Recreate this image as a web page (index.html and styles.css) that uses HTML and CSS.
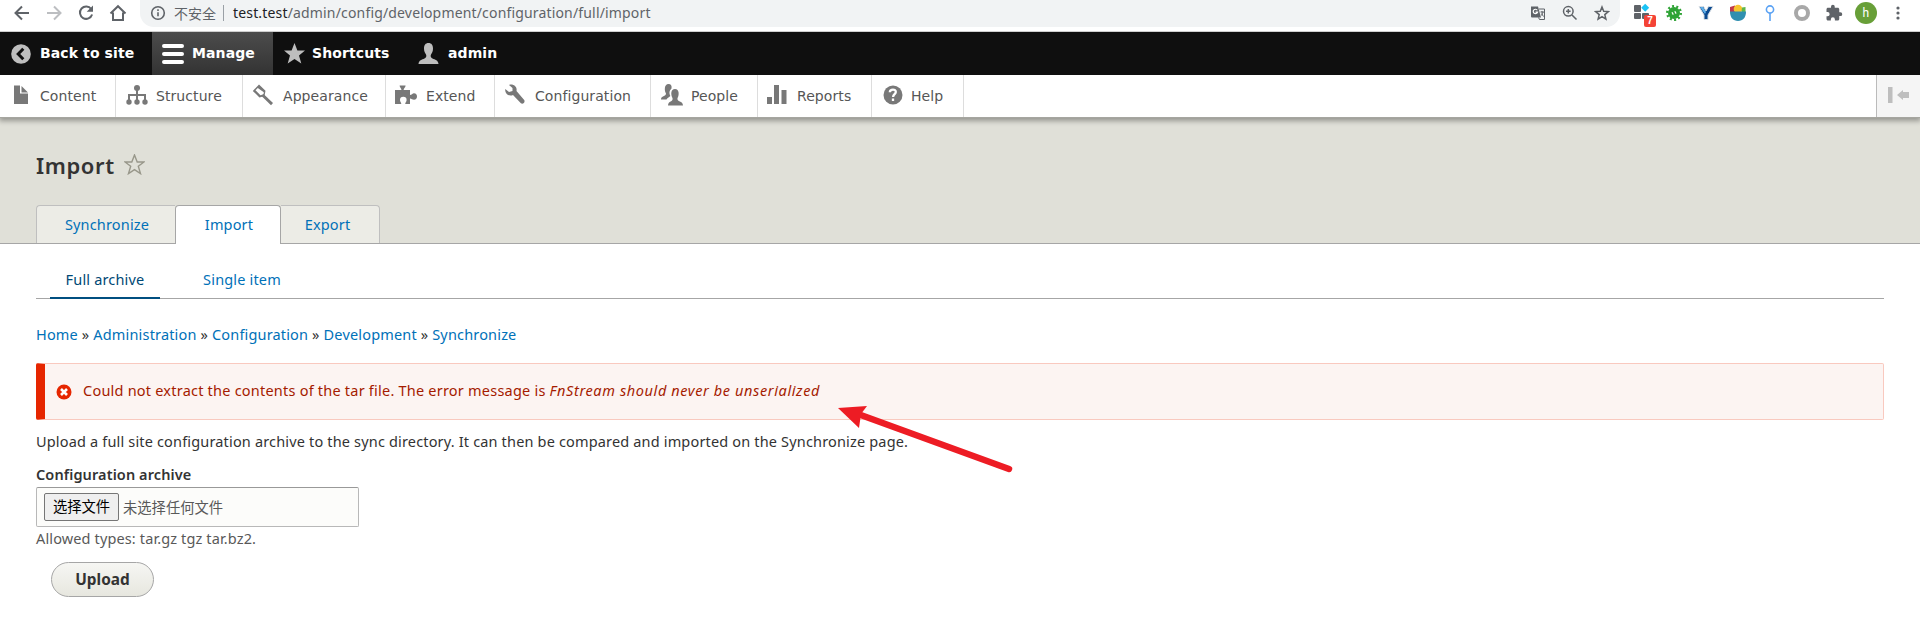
FILE: index.html
```html
<!DOCTYPE html>
<html lang="en">
<head>
<meta charset="utf-8">
<title>Import</title>
<link rel="stylesheet" href="styles.css">
</head>
<body>
<svg class="defs" width="0" height="0">
  <symbol id="puzzle" viewBox="0 0 24 24"><path d="M20.500 11H19V7c0-1.100-.9-2-2-2h-4V3.500a2.500 2.500 0 0 0-5 0V5H4c-1.100 0-2 .9-2 2v3.800h1.500a2.700 2.700 0 0 1 0 5.400H2V20c0 1.100.9 2 2 2h3.800v-1.500a2.700 2.700 0 0 1 5.400 0V22H17c1.100 0 2-.9 2-2v-4h1.500a2.500 2.500 0 0 0 0-5z"/></symbol>
</svg>
<header class="browser">
  <div class="nav">
    <svg width="20" height="20" viewBox="0 0 20 20"><path d="M17 10H4M10 3.500L3.500 10l6.500 6.500"/></svg>
    <svg class="off" width="20" height="20" viewBox="0 0 20 20"><path d="M3 10h13M10 3.500l6.500 6.500-6.500 6.500"/></svg>
    <svg width="20" height="20" viewBox="0 0 20 20"><path d="M15.200 6A6.200 6.200 0 1 0 16.100 11.500"/><path class="solid" d="M17 2.500v6.300h-6.300z"/></svg>
    <svg width="20" height="20" viewBox="0 0 20 20"><path d="M2.500 10.500L10 3.200l7.500 7.300M5 9.500V17h10V9.500"/></svg>
  </div>
  <div class="omnibox">
    <svg class="info" width="16" height="16" viewBox="0 0 16 16"><circle cx="8" cy="8" r="6.300"/><path d="M8 7.200v4M8 4.300v1.600"/></svg>
    <span class="insecure">不安全</span>
    <span class="url"><b>test.test</b>/admin/config/development/configuration/full/import</span>
    <div class="actions">
      <svg width="16" height="16" viewBox="0 0 16 16"><path class="fill" d="M1 1.500h7l3 11H2a1 1 0 0 1-1-1z"/><path class="thin" d="M9 4h5.500v10.500H9.500l-1-2M10.500 7h3.500M12 6v1.500M13 7c-.5 2-1 3-2 3.500M11.500 8.500l2 3"/><path class="white" d="M7.300 5.300A2.200 2.200 0 1 0 7.500 7.200H5.500"/></svg>
      <svg width="16" height="16" viewBox="0 0 16 16"><circle cx="6.300" cy="6.300" r="4.800"/><path d="M10 10l4.500 4.500M4 6.300h4.600M6.300 4v4.600"/></svg>
      <svg width="16" height="16" viewBox="0 0 16 16"><path d="M8 2l1.700 4.300 4.600.3-3.500 3 1.100 4.500L8 11.600l-3.900 2.500 1.100-4.500-3.500-3 4.600-.3z"/></svg>
    </div>
  </div>
  <div class="extensions">
    <div class="blocks"><svg width="20" height="20" viewBox="0 0 20 20"><g fill="#5f6368"><rect x="1" y="2" width="7" height="7" rx="1"/><rect x="1" y="10" width="7" height="6" rx="1"/><rect x="9" y="10" width="7" height="6" rx="1"/></g><path fill="#1bc3f5" d="M12.200 0.800l4 4-4 4-4-4z"/></svg><span class="badge">7</span></div>
    <svg width="18" height="18" viewBox="0 0 18 18"><circle cx="9" cy="9" r="6" fill="#2ea335"/><circle cx="9" cy="9" r="6.800" fill="none" stroke="#2ea335" stroke-width="2.400" stroke-dasharray="2 2.270"/><path d="M7 8.200l1.300 2.400M9.800 7.200l1.300 2.400" stroke="#fff" stroke-width="1.200"/></svg>
    <svg width="18" height="18" viewBox="0 0 18 18"><path d="M2 2.500h4.500L9 7l2.500-4.500H16L11 11v4.500H7V11z" fill="#0b4a90" stroke="#d5dce3"/><path d="M3 3h3l3 5-1 2z" fill="#5fb0ea"/></svg>
    <svg width="18" height="18" viewBox="0 0 18 18"><path fill="#c0394b" d="M1 3l5-1.500V8H1z"/><circle cx="9" cy="5" r="4.300" fill="#f7c52f"/><path fill="#5eb64a" d="M13 3.500l3.500-.5v5h-4z"/><path fill="#308fb0" d="M1 7.500h16c0 6-3 9.500-8 9.500s-8-3.500-8-9.500z"/></svg>
    <svg width="18" height="18" viewBox="0 0 18 18"><circle cx="9" cy="5.500" r="3.600" fill="none" stroke="#5ba2f4" stroke-width="1.600"/><path d="M9 9v8" stroke="#5ba2f4" stroke-width="1.600"/></svg>
    <svg width="18" height="18" viewBox="0 0 18 18"><circle cx="9" cy="9" r="6" fill="none" stroke="#a8a8a8" stroke-width="4"/></svg>
    <svg width="18" height="18" fill="#5f6368"><use href="#puzzle"/></svg>
    <span class="avatar">h</span>
    <svg width="18" height="18" viewBox="0 0 18 18" fill="#5f6368"><circle cx="9" cy="4" r="1.600"/><circle cx="9" cy="9" r="1.600"/><circle cx="9" cy="14" r="1.600"/></svg>
  </div>
</header>

<nav class="bar">
  <a class="back"><svg width="20" height="20" viewBox="0 0 20 20"><circle cx="10" cy="10" r="9.800" fill="#bebebe"/><path d="M12.300 4.800L7.200 10l5.100 5.200" fill="none" stroke="#0f0f0f" stroke-width="3"/></svg><span>Back to site</span></a>
  <a class="manage"><svg width="22" height="22" viewBox="0 0 22 22"><path d="M2 3h18M2 11h18M2 19h18" stroke="#fff" stroke-width="4" stroke-linecap="round"/></svg><span>Manage</span></a>
  <a class="shortcuts"><svg width="21" height="21" viewBox="0 0 21 21" fill="#bebebe"><path d="M10.500 0l2.900 7.500H21l-6 4.900 2.300 8.100-6.800-4.600-6.800 4.600L6 12.400 0 7.500h7.600z"/></svg><span>Shortcuts</span></a>
  <a class="user"><svg width="21" height="21" viewBox="0 0 21 21" fill="#bebebe"><path d="M10.500 0C7.500 0 6 2.200 6 5.500c0 3 1 4.500 2 6 .8 1.500.2 3.200-1.500 3.900C4 16.500.8 17 .5 21h20c-.3-4-3.500-4.500-6-5.600-1.700-.7-2.300-2.400-1.500-3.900 1-1.500 2-3 2-6C15 2.200 13.500 0 10.500 0z"/></svg><span>admin</span></a>
</nav>

<nav class="tray">
  <a class="t-content"><svg width="22" height="22" viewBox="0 0 22 22"><path d="M4 1.500h6v8h8V20H4z"/><path d="M11.500 2l6.500 6.500h-6.500z"/></svg><span>Content</span></a>
  <a class="t-structure"><svg width="22" height="22" viewBox="0 0 22 22"><circle cx="11" cy="4" r="3"/><path d="M11 5v13M3 17v-6h16v6" fill="none" stroke="#787878" stroke-width="2"/><circle cx="3" cy="18" r="2.700"/><circle cx="11" cy="18" r="2.700"/><circle cx="19" cy="18" r="2.700"/></svg><span>Structure</span></a>
  <a class="t-appearance"><svg width="22" height="22" viewBox="0 0 22 22"><path fill-rule="evenodd" d="M7 .5l6.500 6.300-1 5.200-5 1.500L.8 6.900zM5.800 4L3.500 6.300l5 5 3-1 .3-2z"/><path d="M11.500 10l9.500 9-2 2.300-9.500-9.300z"/></svg><span>Appearance</span></a>
  <a class="t-extend"><svg width="23" height="22" viewBox="0 0 23 22"><path d="M0 6h6.500c-.2-1.700-1.900-2.500-1.900-4.500h6c0 2-1.800 2.800-2 4.500H15v5c1.500 0 2.500-1.800 4-1.800 2 0 3 1.500 3 3.300s-1 3.300-3 3.300c-1.500 0-2.500-1.300-4-1.300V20h-4.800c0-1.700 1.400-2 1.400-4a3.300 3.300 0 0 0-6.600 0c0 2 1.300 2.300 1.300 4H0z"/></svg><span>Extend</span></a>
  <a class="t-config"><svg width="22" height="22" viewBox="0 0 22 22"><path d="M5 1c4-1.500 8.500 1.500 7.500 6l7.700 9c1.300 2-1.200 4.700-3.300 3.300L9 11C5 13 .5 9.500 1.300 5L5 8l3.500-1V4z"/></svg><span>Configuration</span></a>
  <a class="t-people"><svg width="22" height="23" viewBox="0 0 22 23"><path d="M7.500 1C10 1 11 3 10.500 5.500 8 7.500 8 10.500 9.300 13c-1.500 1.800-3 1.700-3.800 3.500H0c0-4 5-2.800 5-6C3.300 8 3 1 7.500 1z"/><path d="M14 6c4.500 0 4.300 6.500 2.500 9-1 4.200 5.500 2.500 5.500 7.500H7c0-5 5.500-3.300 4.500-7.500-1.800-3-2-9 2.500-9z"/></svg><span>People</span></a>
  <a class="t-reports"><svg width="22" height="22" viewBox="0 0 22 22"><rect x="1" y="13" width="5" height="7"/><rect x="8" y="1" width="5" height="19"/><rect x="15.500" y="6" width="5" height="14"/></svg><span>Reports</span></a>
  <a class="t-help"><svg width="20" height="20" viewBox="0 0 20 20"><circle cx="10" cy="10" r="9.500"/><path d="M6.800 7.200C7 3.700 13 3.800 12.800 7c0 2-2.700 2.300-2.700 5M10 13.500V16" fill="none" stroke="#fff" stroke-width="2.300"/></svg><span>Help</span></a>
  <div class="toggle"><svg width="22" height="18" viewBox="0 0 22 18" fill="#bebebe"><rect x="0" y="1" width="4.500" height="16"/><path d="M9 9l6-5v2h6v6h-6v2z"/></svg></div>
</nav>

<section class="head">
  <div class="title"><h1>Import</h1><svg width="21" height="21" viewBox="0 0 21 21"><path d="M10.500 1l2.700 7H20l-5.700 4.300 2.200 7.300-6-4-6 4 2.200-7.300L1 8h6.800z"/></svg></div>
  <div class="tabs"><a class="tab sync">Synchronize</a><a class="tab active">Import</a><a class="tab export">Export</a></div>
</section>

<main>
  <div class="subtabs"><a class="current">Full archive</a><a>Single item</a></div>
  <nav class="crumbs"><a>Home</a> » <a>Administration</a> » <a>Configuration</a> » <a>Development</a> » <a>Synchronize</a></nav>
  <div class="error">
    <svg width="16" height="16" viewBox="0 0 16 16"><circle cx="8" cy="8" r="7.500" fill="#e62600"/><path d="M5 5l6 6M11 5l-6 6" stroke="#fff" stroke-width="2.600"/></svg>
    <span class="msg">Could not extract the contents of the tar file. The error message is <em>FnStream should never be unserialized</em></span>
    <svg class="arrow" width="180" height="76" viewBox="0 0 180 76"><path d="M20 10l151 55" stroke="#ed1c24" stroke-width="6.500" stroke-linecap="round"/><path fill="#ed1c24" d="M0 4l29-2-6 8-2 14z"/></svg>
  </div>
  <p class="intro">Upload a full site configuration archive to the sync directory. It can then be compared and imported on the Synchronize page.</p>
  <label class="label">Configuration archive</label>
  <div class="file"><button class="choose">选择文件</button><span>未选择任何文件</span></div>
  <p class="hint">Allowed types: tar.gz tgz tar.bz2.</p>
  <button class="upload">Upload</button>
</main>
</body>
</html>
```
FILE: styles.css
```css
* { box-sizing: border-box; }
body { margin: 0; background: #fff; color: #333; font: 14.5px/22px "Noto Sans", "Noto Sans CJK SC", sans-serif; letter-spacing: .165px; overflow: hidden; }
svg { flex: none; display: block; }
a { color: #0071b8; }
.defs { position: absolute; }

/* browser chrome */
.browser { height: 32px; display: flex; align-items: flex-start; border-bottom: 1px solid #cfcfcf; background: #fff; }
.nav { width: 140px; padding: 3px 0 0 12px; display: flex; gap: 12px; }
.nav path { fill: none; stroke: #5f6368; stroke-width: 2; }
.nav .off path { stroke: #bcbec1; }
.nav .solid { fill: #5f6368; stroke: none; }
.omnibox { width: 1480px; height: 27px; padding: 0 10px 1px 10px; display: flex; align-items: center; background: #f1f3f4; border-radius: 0 0 14px 14px; }
.info { fill: none; stroke: #5f6368; stroke-width: 1.600; }
.insecure { margin-left: 8px; padding-right: 7px; border-right: 1px solid #9aa0a6; font: 14px/16px "Noto Sans CJK SC", sans-serif; letter-spacing: 0; color: #5f6368; }
.url { margin-left: 9px; font-size: 14px; color: #5f6368; }
.url b { font-weight: 400; color: #202124; }
.actions { margin-left: auto; display: flex; gap: 16px; }
.actions svg { fill: none; stroke: #5f6368; stroke-width: 1.500; }
.actions .fill { fill: #5f6368; stroke: none; }
.actions .thin { stroke-width: 1; }
.actions .white { stroke: #fff; stroke-width: 1.200; }
.extensions { width: 300px; height: 26px; padding-left: 13px; display: flex; align-items: center; gap: 14px; }
.blocks { position: relative; width: 20px; height: 20px; margin-right: -2px; }
.badge { position: absolute; left: 11px; top: 12px; width: 12px; height: 12px; border-radius: 2px; background: #f44336; color: #fff; font: bold 10px/12px "Liberation Sans", sans-serif; letter-spacing: 0; text-align: center; }
.avatar { width: 22px; height: 22px; margin: 0 -2px; border-radius: 50%; background: #689f38; color: #fff; font: 12px/22px Roboto, sans-serif; text-align: center; }

/* admin toolbar */
.bar { height: 43px; display: flex; background: #0f0f0f; font: bold 14px/43px "DejaVu Sans", sans-serif; letter-spacing: .1px; }
.bar a { display: flex; align-items: center; color: #fff; }
.back { width: 152px; padding-left: 11px; gap: 9px; }
.manage { width: 121px; padding-left: 10px; gap: 8px; background: linear-gradient(#4c4c4c, #333); }
.shortcuts { width: 135px; padding-left: 11px; gap: 7px; }
.user { padding-left: 10px; gap: 9px; }
.tray { position: relative; z-index: 1; height: 42px; display: flex; background: #fff; font: 14px/42px "DejaVu Sans", sans-serif; letter-spacing: .08px; box-shadow: 0 0 0 1px #a6a6a0, 0 3px 5px 1px rgba(0,0,0,.33); clip-path: inset(0 0 -12px 0); }
.tray a { display: flex; align-items: center; color: #565656; border-right: 1px solid #ddd; fill: #787878; }
.tray a svg { margin-bottom: 3px; }
.t-content { width: 116px; padding-left: 10px; gap: 8px; }
.t-structure { width: 127px; padding-left: 10px; gap: 8px; }
.t-appearance { width: 143px; padding-left: 9px; gap: 9px; }
.t-extend { width: 109px; padding-left: 9px; gap: 8px; }
.t-config { width: 156px; padding-left: 9px; gap: 9px; }
.t-people { width: 107px; padding-left: 10px; gap: 8px; }
.t-reports { width: 114px; padding-left: 8px; gap: 9px; }
.t-help { width: 92px; padding-left: 11px; gap: 8px; }
.toggle { width: 44px; margin-left: auto; padding: 11px 0 0 11px; background: #f5f5f5; border-left: 1px solid #bbb; }

/* page header */
.head { height: 127px; padding: 36px 36px 0; background: #e0e0d8; border-bottom: 1px solid #a6a6a6; }
.title { display: flex; gap: 9px; height: 52px; }
.title svg { margin-top: 1px; fill: none; stroke: #98978a; stroke-width: 1.400; }
h1 { margin: 0; font: 600 22px/24px "Noto Sans", sans-serif; letter-spacing: .6px; color: #333; }
.tabs { display: flex; }
.tab { height: 38px; line-height: 36px; text-align: center; background: #ecece6; border: 1px solid #bfbfbf; border-bottom: 0; }
.sync { width: 139px; padding-left: 2px; border-right: 0; border-radius: 4px 0 0 0; }
.active { width: 106px; height: 39px; padding-left: 2px; background: #fff; border-color: #a6a6a6; border-radius: 4px 4px 0 0; }
.export { width: 99px; padding-right: 5px; border-left: 0; border-radius: 0 4px 0 0; }

/* content */
main { padding: 18px 36px 0; }
.subtabs { height: 37px; padding-left: 14px; display: flex; border-bottom: 1px solid #a6a6a6; line-height: 34px; }
.subtabs a { width: 110px; height: 37px; text-align: center; margin-right: 27px; }
.subtabs .current { color: #004875; border-bottom: 2px solid #004f80; }
.crumbs { margin-top: 24px; }
.error { position: relative; height: 57px; margin-top: 18px; padding-left: 11px; display: flex; align-items: center; gap: 11px; background: #fcf4f2; border: 1px solid #f9c9bf; border-left: 9px solid #e62600; border-radius: 2px; color: #a51b00; }
.msg { margin-top: -3px; letter-spacing: .22px; }
.msg em { letter-spacing: .61px; }
.arrow { position: absolute; left: 793px; top: 40px; fill: none; }
.intro { margin: 10px 0 0; }
.label { display: block; margin-top: 11px; font-weight: 600; letter-spacing: .1px; }
.file { width: 323px; height: 40px; margin-top: 2px; padding: 0 7px 1px; display: flex; align-items: center; gap: 4px; background: #fcfcfa; border: 1px solid #b8b8b8; border-top-color: #999; border-radius: 2px; color: #595959; font: 14.3px/20px "Noto Sans CJK SC", sans-serif; letter-spacing: 0; }
.choose { width: 75px; height: 28px; padding: 0 0 1px; background: #efefef; border: 1px solid #767676; border-radius: 2px; color: #000; font: inherit; }
.hint { margin: 0; color: #595959; letter-spacing: .13px; }
.upload { display: block; width: 103px; height: 35px; margin: 13px 0 0 15px; padding: 1px 0 0; border: 1px solid #a6a6a6; border-radius: 18px; background: linear-gradient(#f6f6f3, #e7e7df); color: #333; font: 700 15.4px/22px "Noto Sans", sans-serif; }
```
